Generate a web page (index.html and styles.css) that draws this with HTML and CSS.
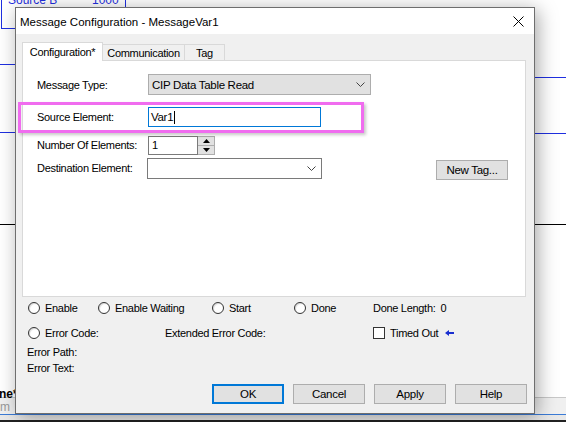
FILE: index.html
```html
<!DOCTYPE html>
<html>
<head>
<meta charset="utf-8">
<link rel="stylesheet" href="styles.css">
</head>
<body>
<div class="desk">
  <div class="instr-box"></div>
  <span class="src-label">Source B</span>
  <span class="src-value">1000</span>
  <div class="rung rung-blue l1"></div>
  <div class="rung rung-blue l2"></div>
  <div class="rung rung-blue r1"></div>
  <div class="rung rung-blue r2"></div>
  <div class="rung rung-black k1"></div>
  <div class="bottom-strip">
    <span class="strip-bold">ne*</span>
    <span class="strip-gray">m</span>
  </div>
  <div class="bottom-line"></div>
</div>

<div class="dialog">
  <div class="titlebar">
    <span class="title">Message Configuration - MessageVar1</span>
    <svg class="close" width="11" height="11" viewBox="0 0 11 11"><path d="M0.5 0.5 L10.5 10.5 M10.5 0.5 L0.5 10.5" stroke="#000" stroke-width="1" fill="none"/></svg>
  </div>
  <div class="content">
    <div class="tabs">
      <div class="tab active">Configuration*</div>
      <div class="tab t-comm">Communication</div>
      <div class="tab t-tag">Tag</div>
    </div>
    <div class="panel">
      <div class="highlight"></div>
      <div class="row row1">
        <span class="label">Message Type:</span>
        <div class="select grey w-type">
          <span>CIP Data Table Read</span>
          <svg class="chev" width="9" height="5" viewBox="0 0 9 5"><path d="M0.5 0.5 L4.5 4.5 L8.5 0.5" stroke="#444" fill="none"/></svg>
        </div>
      </div>
      <div class="row row2">
        <span class="label">Source Element:</span>
        <div class="input focus w-src"><span>Var1</span><span class="caret"></span></div>
      </div>
      <div class="row row3">
        <span class="label">Number Of Elements:</span>
        <div class="input w-num"><span>1</span></div>
        <div class="spin">
          <div class="spin-btn"><svg width="7" height="4" viewBox="0 0 7 4"><path d="M0 4 L3.5 0 L7 4 Z" fill="#000"/></svg></div>
          <div class="spin-btn"><svg width="7" height="4" viewBox="0 0 7 4"><path d="M0 0 L7 0 L3.5 4 Z" fill="#000"/></svg></div>
        </div>
      </div>
      <div class="row row4">
        <span class="label">Destination Element:</span>
        <div class="select white w-dest">
          <span></span>
          <svg class="chev" width="9" height="5" viewBox="0 0 9 5"><path d="M0.5 0.5 L4.5 4.5 L8.5 0.5" stroke="#444" fill="none"/></svg>
        </div>
        <div class="btn newtag">New Tag...</div>
      </div>
    </div>

    <div class="status">
      <div class="srow srow1">
        <div class="item w-enable"><span class="radio"></span>Enable</div>
        <div class="item w-wait"><span class="radio"></span>Enable Waiting</div>
        <div class="item w-start"><span class="radio"></span>Start</div>
        <div class="item w-done"><span class="radio"></span>Done</div>
        <div class="item">Done Length:<span class="zero">0</span></div>
      </div>
      <div class="srow srow2">
        <div class="item w-err"><span class="radio"></span>Error Code:</div>
        <div class="item w-ext">Extended Error Code:</div>
        <div class="item"><span class="check"></span>Timed Out
          <svg class="arrow" width="9" height="6" viewBox="0 0 9 6"><path d="M0 3 L4 0 L4 2 L9 2 L9 4 L4 4 L4 6 Z" fill="#1a2fd0"/></svg>
        </div>
      </div>
      <div class="srow srow3">Error Path:</div>
      <div class="srow srow4">Error Text:</div>
    </div>

    <div class="buttons">
      <div class="btn dlg default">OK</div>
      <div class="btn dlg">Cancel</div>
      <div class="btn dlg">Apply</div>
      <div class="btn dlg">Help</div>
    </div>
  </div>
</div>
</body>
</html>
```
FILE: styles.css
```css
html, body {
  margin: 0;
  padding: 0;
}
body {
  width: 566px;
  height: 422px;
  overflow: hidden;
  position: relative;
  background: #ffffff;
  font-family: "Liberation Sans", Arial, sans-serif;
  color: #000;
}

/* background ladder editor */
.desk {
  position: absolute;
  inset: 0;
}
.instr-box {
  position: absolute;
  left: 1px;
  top: -10px;
  width: 123px;
  height: 37px;
  border: 1px solid #1f2fe0;
}
.src-label, .src-value {
  position: absolute;
  top: -7px;
  font-size: 12px;
  color: #1f2fe0;
}
.src-label { left: 8px; }
.src-value { left: 92px; }
.rung {
  position: absolute;
  height: 1px;
}
.rung-blue { background: #1f2fe0; }
.rung-black { background: #000; }
.l1 { left: 0; width: 15px; top: 64px; }
.l2 { left: 0; width: 15px; top: 132px; }
.r1 { left: 534px; right: 0; top: 77px; }
.r2 { left: 534px; right: 0; top: 133px; }
.k1 { left: 0; right: 0; top: 224px; }
.bottom-strip {
  position: absolute;
  left: 0;
  right: 0;
  top: 397px;
  height: 16px;
  background: #f0f0f0;
  border-top: 1px solid #c8c8c8;
}
.strip-bold {
  position: absolute;
  left: -1px;
  top: -11px;
  font-size: 12px;
  font-weight: bold;
}
.strip-gray {
  position: absolute;
  left: 0;
  top: 2px;
  font-size: 12px;
  color: #999;
}
.bottom-line {
  position: absolute;
  left: 0;
  right: 0;
  top: 414px;
  height: 8px;
  border-top: 1px solid #3b7bd6;
  border-bottom: 2px solid #222;
  background: #e8e8e8;
  box-sizing: border-box;
}

/* dialog window */
.dialog {
  position: absolute;
  left: 15px;
  top: 7px;
  width: 520px;
  height: 407px;
  box-sizing: border-box;
  border: 1px solid #6e6e6e;
  background: #f0f0f0;
  box-shadow: 3px 3px 18px rgba(0, 0, 0, 0.35);
  font-size: 11px;
  letter-spacing: -0.3px;
}
.titlebar {
  height: 26px;
  background: #fff;
  display: flex;
  align-items: center;
  justify-content: space-between;
  padding: 0 10px 0 4px;
}
.title {
  font-size: 11.5px;
  letter-spacing: 0;
  padding-top: 1px;
}
.close { display: block; margin-top: 1px; }

.content {
  padding: 8px 0 0 6px;
}

/* tabs */
.tabs {
  display: flex;
  align-items: flex-end;
  height: 18px;
}
.tab {
  box-sizing: border-box;
  height: 16px;
  border: 1px solid #d9d9d9;
  border-bottom: none;
  background: #f0f0f0;
  display: flex;
  align-items: center;
  justify-content: center;
  padding-top: 1px;
}
.tab.active {
  width: 81px;
  background: #fff;
  position: relative;
  z-index: 1;
  margin-bottom: -1px;
  height: 19px;
  padding-bottom: 1px;
}
.t-comm { width: 82px; border-left: none; }
.t-tag { width: 40px; border-left: none; }

/* panel */
.panel {
  position: relative;
  box-sizing: border-box;
  width: 504px;
  height: 237px;
  border: 1px solid #d9d9d9;
  background: #fff;
  padding: 13px 17px 0 14px;
}
.highlight {
  position: absolute;
  left: -5px;
  top: 41px;
  width: 346px;
  height: 31px;
  box-sizing: border-box;
  border: 3px solid #f06cef;
  box-shadow: 2px 2px 3px rgba(0, 0, 0, 0.22);
}
.row {
  display: flex;
  align-items: center;
}
.label {
  width: 111px;
  flex: none;
}
.row1 { height: 21px; }
.row2 { height: 20px; margin-top: 12px; }
.row3 { height: 18px; margin-top: 9px; }
.row4 { height: 21px; margin-top: 4px; align-items: flex-start; }
.row4 .label { margin-top: 4px; }

.select, .input {
  box-sizing: border-box;
  height: 100%;
  display: flex;
  align-items: center;
  justify-content: space-between;
  padding: 0 5px 0 3px;
}
.select.grey {
  background: #e1e1e1;
  border: 1px solid #adadad;
}
.select.white {
  background: #fff;
  border: 1px solid #7a7a7a;
}
.w-type { width: 223px; font-size: 11.5px; }
.w-dest { width: 175px; margin-left: -1px; }
.input {
  background: #fff;
  border: 1px solid #7a7a7a;
  justify-content: flex-start;
}
.input.focus { border-color: #0078d7; }
.w-src { width: 173px; font-size: 11.5px; padding-left: 2px; }
.w-num { width: 50px; height: 19px; }
.caret {
  display: inline-block;
  width: 1px;
  height: 13px;
  background: #000;
  margin-left: 1px;
}
.spin {
  width: 17px;
  height: 19px;
  box-sizing: border-box;
  display: flex;
  flex-direction: column;
  border: 1px solid #adadad;
  border-left: none;
  background: #e1e1e1;
}
.spin-btn {
  flex: 1;
  display: flex;
  align-items: center;
  justify-content: center;
}
.spin-btn + .spin-btn { border-top: 1px solid #adadad; }

.btn {
  box-sizing: border-box;
  background: #e1e1e1;
  border: 1px solid #adadad;
  display: flex;
  align-items: center;
  justify-content: center;
}
.newtag {
  margin-left: auto;
  margin-top: 2px;
  width: 72px;
  height: 20px;
  font-size: 11.5px;
}

/* status area */
.status {
  padding-left: 6px;
}
.srow {
  display: flex;
  align-items: center;
  height: 14px;
}
.srow1 { margin-top: 4px; }
.srow2 { margin-top: 11px; }
.srow3 { margin-top: 5px; margin-left: -1px; }
.srow4 { margin-top: 2px; margin-left: -1px; }
.item {
  display: flex;
  align-items: center;
  flex: none;
}
.w-enable { width: 70px; }
.w-wait { width: 114px; }
.w-start { width: 82px; }
.w-done { width: 79px; }
.w-err { width: 137px; }
.w-ext { width: 208px; }
.radio {
  width: 12px;
  height: 12px;
  box-sizing: border-box;
  border: 1px solid #333;
  border-radius: 50%;
  background: #fff;
  margin-right: 5px;
  box-shadow: inset 1px 1px 1px rgba(0,0,0,0.15);
}
.zero { margin-left: 5px; }
.check {
  width: 12px;
  height: 12px;
  box-sizing: border-box;
  border: 1px solid #333;
  background: #fff;
  margin-right: 5px;
}
.arrow { margin-left: 7px; }

/* buttons */
.buttons {
  display: flex;
  gap: 9px;
  margin-top: 9px;
  padding-left: 190px;
}
.dlg {
  width: 72px;
  height: 20px;
  font-size: 11.5px;
}
.dlg.default {
  border: 2px solid #0078d7;
}
```
